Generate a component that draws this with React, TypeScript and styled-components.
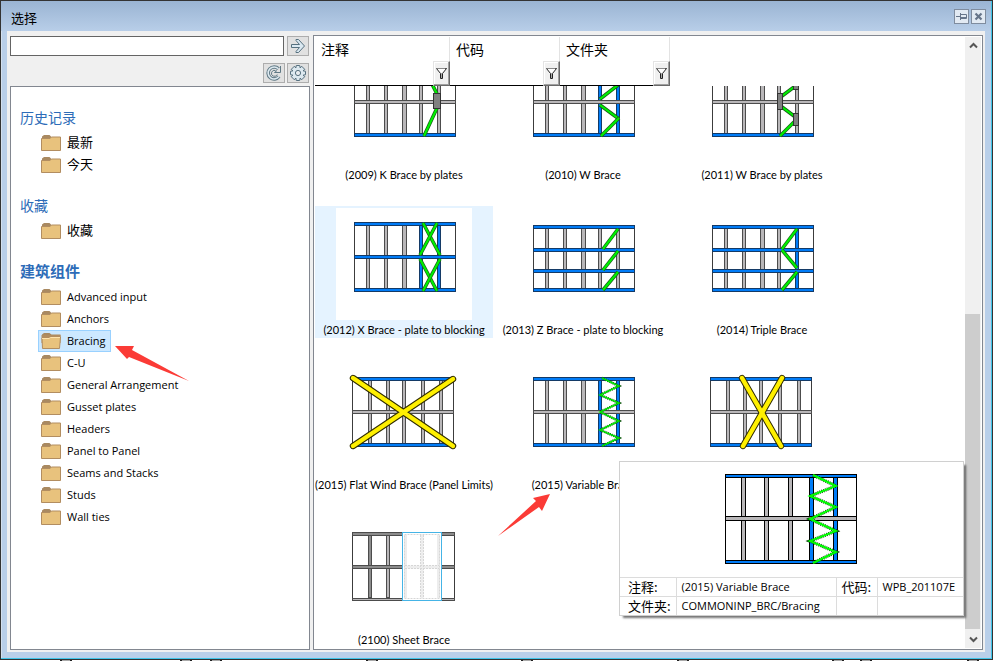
import React from "react";
import styled, { createGlobalStyle, css } from "styled-components";

const GlobalStyle = createGlobalStyle`
  *, *::before, *::after { box-sizing: border-box; }
  body {
    margin: 0;
    background: #fff;
    color: #000;
    font-family: "Open Sans", "Noto Sans CJK SC", sans-serif;
    font-size: 11px;
  }
  button, input { font: inherit; color: inherit; }
  svg { display: block; }
`;

const cjk = css`
  font-family: "Noto Sans CJK SC", sans-serif;
`;

/* ---------- window frame ---------- */

const Page = styled.div`
  display: flex;
  flex-direction: column;
  height: 100vh;
  min-height: 560px;
`;

const Window = styled.main`
  flex: 1;
  min-height: 0;
  margin-right: 1px;
  display: flex;
  flex-direction: column;
  padding: 0 7px 7px 6px;
  background: #b9cfe9;
  border: 1px solid #333;
  box-shadow: inset -1px -1px 0 #3fc4e8, inset 1px 1px 0 #d3e0ef;
`;

const TitleBar = styled.header`
  flex: none;
  display: flex;
  align-items: center;
  justify-content: space-between;
  height: 30px;
  margin: 0 -6px 0 -6px;
  padding: 0 5px 0 10px;
  background: linear-gradient(#9ab4d3, #b8cee8);
`;

const Title = styled.h1`
  ${cjk}
  margin: 0;
  padding-top: 4px;
  font-size: 13px;
  line-height: 20px;
  font-weight: 400;
`;

const CaptionButtons = styled.div`
  display: flex;
  gap: 2px;
`;

const CaptionButton = styled.button`
  width: 15px;
  height: 15px;
  padding: 0;
  display: grid;
  place-items: center;
  background: #e2eaf3;
  border: 1px solid #7f8c9e;
`;

const Body = styled.div`
  flex: 1;
  min-height: 0;
  display: flex;
  gap: 3px;
  padding: 4px 2px 2px;
  background: #f0f0f0;
  border-left: 1px solid #f0f0f0;
`;

const BottomEdge = styled.svg`
  flex: none;
  width: 100%;
  height: 1px;
`;

/* ---------- left side ---------- */

const Sidebar = styled.aside`
  flex: none;
  width: 300px;
  display: flex;
  flex-direction: column;
`;

const ToolRow = styled.div`
  display: flex;
  justify-content: flex-end;
  gap: 2px;
  height: 20px;
  margin: 1px 1px 6px 0;
`;

const SearchInput = styled.input`
  flex: 1;
  min-width: 0;
  margin-right: 1px;
  padding: 0 4px;
  background: #fff;
  border: 1px solid #646464;
  outline: none;
`;

const ToolButton = styled.button`
  width: 22px;
  padding: 0;
  display: grid;
  place-items: center;
  background: #e1e1e1;
  border: 1px solid #adadad;
`;

const Tree = styled.nav`
  flex: 1;
  margin-top: -3px;
  padding: 23px 9px 0;
  background: #fff;
  border: 1px solid #828790;
`;

const Section = styled.section`
  margin-bottom: 22px;
`;

const Heading = styled.h2<{ $strong?: boolean }>`
  ${cjk}
  height: 22px;
  margin: 0;
  color: #2d6cb8;
  font-size: ${(p) => (p.$strong ? 15 : 14)}px;
  font-weight: ${(p) => (p.$strong ? 700 : 400)};
  line-height: 14px;
`;

const List = styled.ul`
  margin: 0;
  padding: 0 0 0 18px;
  list-style: none;
`;

const ListItem = styled.li`
  display: flex;
  height: 22px;
`;

const TreeButton = styled.button<{ $selected?: boolean }>`
  position: relative;
  display: flex;
  align-items: center;
  gap: 6px;
  padding: 0 5px 0 2px;
  border: 1px solid ${(p) => (p.$selected ? "#99d1ff" : "transparent")};
  background: ${(p) => (p.$selected ? "#cce8ff" : "transparent")};
  line-height: 20px;
  white-space: nowrap;
`;

const TreeLabel = styled.span<{ $cjk?: boolean }>`
  padding-bottom: ${(p) => (p.$cjk ? 2 : 0)}px;
  font-size: ${(p) => (p.$cjk ? 13 : 11)}px;
`;

const TreePointer = styled.svg`
  position: absolute;
  left: 75px;
  top: 14px;
  z-index: 2;
`;

/* ---------- right side ---------- */

const Catalog = styled.section`
  position: relative;
  flex: 1;
  min-width: 0;
  display: flex;
  padding: 1px;
  background: #fff;
  border: 1px solid #828790;
`;

const CatalogMain = styled.div`
  flex: 1;
  min-width: 0;
  display: flex;
  flex-direction: column;
`;

const FilterBar = styled.div`
  flex: none;
  display: flex;
  height: 49px;
`;

const FilterCell = styled.div<{ $width: number }>`
  width: ${(p) => p.$width}px;
  display: flex;
  flex-direction: column;
  justify-content: space-between;
  padding-left: 6px;
  border-right: 1px solid #e3e3e3;
  border-bottom: 1px solid #000;
`;

const FilterLabel = styled.span`
  ${cjk}
  font-size: 14px;
  line-height: 24px;
`;

const FilterButton = styled.button`
  align-self: flex-end;
  width: 17px;
  height: 25px;
  margin: 0 -1px -1px 0;
  padding: 0;
  display: grid;
  place-items: center;
  background: #f0f0f0;
  border: 1px solid;
  border-color: #e3e3e3 #696969 #696969 #e3e3e3;
  box-shadow: inset -1px -1px 0 #a0a0a0, inset 1px 1px 0 #fff;
`;

const Gallery = styled.div`
  flex: 1;
  min-height: 0;
  overflow: hidden;
  display: flex;
  flex-direction: column;
  justify-content: flex-end;
`;

const Tiles = styled.div`
  display: grid;
  grid-template-columns: repeat(3, 178px);
  gap: 23px 1px;
`;

const Tile = styled.figure<{ $selected?: boolean }>`
  position: relative;
  display: flex;
  flex-direction: column;
  align-items: center;
  height: 132px;
  margin: 0;
  padding-top: 2px;
  background: ${(p) => (p.$selected ? "#e5f3ff" : "transparent")};
`;

const Thumb = styled.svg`
  flex: none;
  background: #fff;
`;

const Caption = styled.figcaption`
  font-family: Lato, "Liberation Sans", sans-serif;
  font-size: 11px;
  line-height: 20px;
  white-space: nowrap;
`;

const TilePointer = styled.svg`
  position: absolute;
  left: 4px;
  top: 132px;
`;

const ScrollBar = styled.div`
  flex: none;
  width: 16px;
  display: flex;
  flex-direction: column;
  background: #f0f0f0;
`;

const ScrollButton = styled.button`
  flex: none;
  height: 17px;
  padding: 0;
  display: grid;
  place-items: center;
  border: 0;
  background: transparent;
`;

const ScrollSpace = styled.div<{ $share: number }>`
  flex: ${(p) => p.$share};
`;

const ScrollThumb = styled.div`
  flex: 316;
  margin-right: 1px;
  background: #cdcdcd;
`;

const Preview = styled.div`
  position: absolute;
  right: 18px;
  bottom: 33px;
  background: #fff;
  border: 1px solid #d0d0d0;
  box-shadow: 3px 3px 2px -1px rgba(0, 0, 0, 0.55);
`;

const PreviewPicture = styled.div`
  display: flex;
  justify-content: center;
  padding: 12px 0 13px;
`;

const Details = styled.table`
  border-collapse: collapse;
  line-height: 18px;
  white-space: nowrap;

  th, td {
    height: 19px;
    padding: 0 5px;
    border-top: 1px solid #dcdcdc;
    border-right: 1px solid #dcdcdc;
    text-align: left;
    font-weight: 400;
  }
  th {
    ${cjk}
    padding: 0 5px 0 8px;
    font-size: 13px;
  }
  td + th { padding: 0 5px; }
  td:last-child { border-right: 0; }
`;

const DetailColumn = styled.col<{ $width: number }>`
  width: ${(p) => p.$width}px;
`;

/* ---------- icons ---------- */

const FolderIcon = ({ open }: { open?: boolean }) => (
  <svg width="20" height="16" viewBox="0 0 20 16" aria-hidden="true">
    {open ? (
      <>
        <path d="M1 3V1.5L3 0H8.5L10.5 1.5H19.5V4H1Z" fill="#a98961" />
        <path d="M.5 2H19.5V10H.5Z" fill="#b28d60" />
        <path d="M1 5H8L9.5 4H19.5L18.5 15.5H1.5Z" fill="#e8c27d" stroke="#b28d60" />
        <path d="M1 5.5H8L9.5 4.5H19" fill="none" stroke="#ffe4ad" />
      </>
    ) : (
      <>
        <path d="M1 3V1.5L3 0H8.5L10.5 2V4H1Z" fill="#a98961" />
        <path d="M.5 3.5H9L10.5 2H19.5V15.5H.5Z" fill="#e8c27d" stroke="#b28d60" />
      </>
    )}
  </svg>
);

const ArrowIcon = () => (
  <svg width="16" height="16" viewBox="0 0 16 16" aria-hidden="true">
    <path d="M1.5 6.5H9.5L6 2.5V1.5H8.5L14.5 8L8.5 14.5H6V13.5L9.5 9.5H1.5Z" fill="#dbe9f2" stroke="#56707f" />
  </svg>
);

const RefreshIcon = () => (
  <svg width="16" height="16" viewBox="0 0 16 16" fill="none" aria-hidden="true">
    <path d="M13 11.5A6 6 0 1 1 12.5 3.8" stroke="#607985" strokeWidth="3.6" />
    <path d="M13 11.5A6 6 0 1 1 12.5 3.8" stroke="#dce8ef" strokeWidth="1.6" />
    <path d="M14.5 1V7.5H8.5L11 5.5" stroke="#607985" />
    <path d="M11.2 9.5A3 3 0 1 1 9.5 5.5" stroke="#607985" />
  </svg>
);

const GearIcon = () => (
  <svg width="18" height="18" viewBox="-9 -9 18 18" fill="#dce8ef" stroke="#56707f" aria-hidden="true">
    <path
      d="M-1.7 -7.5H1.7L2.2 -5L3.6 -6.8L6.8 -3.6L5 -2.2L7.5 -1.7V1.7L5 2.2L6.8 3.6L3.6 6.8L2.2 5L1.7 7.5H-1.7L-2.2 5L-3.6 6.8L-6.8 3.6L-5 2.2L-7.5 1.7V-1.7L-5 -2.2L-6.8 -3.6L-3.6 -6.8L-2.2 -5Z"
      strokeLinejoin="round"
    />
    <circle r="2.6" fill="#e8edf0" />
  </svg>
);

const PinIcon = () => (
  <svg width="11" height="9" viewBox="0 0 11 9" fill="none" stroke="#66758a" aria-hidden="true">
    <path d="M0 4.5H4M4.5 1V8M4.5 2.5H10.5V6.5H4.5M4.5 5.5H10" />
  </svg>
);

const CloseIcon = () => (
  <svg width="9" height="9" viewBox="0 0 9 9" aria-hidden="true">
    <path d="M1.5 1.5L7.5 7.5M7.5 1.5L1.5 7.5" stroke="#66758a" strokeWidth="2.2" />
  </svg>
);

const FunnelIcon = () => (
  <svg width="11" height="11" viewBox="0 0 11 11" aria-hidden="true">
    <path d="M.5 .5H10.5L6.5 5.5V10.5H4.5V5.5Z" fill="#fff" stroke="#222" />
    <path d="M.5 .5H9.5" stroke="#888" />
    <path d="M5.5 5V10" stroke="#aaa" />
  </svg>
);

const ChevronIcon = ({ down }: { down?: boolean }) => (
  <svg width="9" height="7" viewBox="0 0 9 7" fill="none" stroke="#555" strokeWidth="2" aria-hidden="true">
    <path d={down ? "M1 1.5L4.5 5L8 1.5" : "M1 5.5L4.5 2L8 5.5"} />
  </svg>
);

/* ---------- wall panel drawings ---------- */

type Member = { at: number; size: number; blue?: boolean; dark?: boolean };
type Line = [number, number, number, number];

type Drawing = {
  left?: number;
  right?: number;
  rails: Member[];
  studs: Member[];
  braces?: Line[];
  plates?: Line[];
  straps?: Line[];
  zigzag?: string;
  sheet?: boolean;
};

const memberFill = (m: Member) => (m.blue ? "#007cf8" : m.dark ? "#8c8c8c" : "#b9b7b9");

const Panel = ({ drawing, ink }: { drawing: Drawing; ink?: string }) => {
  const { left = 18, right = 120, rails, studs } = drawing;
  const top = rails[0].at;
  const last = rails[rails.length - 1];
  const bottom = last.at + last.size;
  const outer = (i: number) => i === 0 || i === rails.length - 1;
  const edge = (m: Member) => ink ?? (m.blue ? "#143a66" : "#4c4c4c");
  const rail = (m: Member) => (
    <rect key={m.at} x={left + 0.5} y={m.at + 0.5} width={right - left - 1} height={m.size - 1} fill={memberFill(m)} stroke={edge(m)} />
  );
  return (
    <>
      <rect x={left + 0.5} y={top + 0.5} width={right - left - 1} height={bottom - top - 1} fill="#fff" stroke={ink ?? "#3c3c3c"} />
      {studs.map((m) => (
        <rect key={m.at} x={m.at + 0.5} y={top + 3.5} width={m.size - 1} height={bottom - top - 7} fill={memberFill(m)} stroke={edge(m)} />
      ))}
      {rails.filter((_, i) => !outer(i)).map(rail)}
      {rails.filter((_, i) => outer(i)).map(rail)}
      {drawing.braces?.map(([x1, y1, x2, y2], i) => (
        <g key={i}>
          <line x1={x1} y1={y1} x2={x2} y2={y2} stroke="#176017" strokeWidth="3.6" />
          <line x1={x1} y1={y1} x2={x2} y2={y2} stroke="#00f000" strokeWidth="2.1" />
        </g>
      ))}
      {drawing.plates?.map(([x, y, w, h], i) => (
        <rect key={i} x={x + 0.5} y={y + 0.5} width={w - 1} height={h - 1} fill="#808080" stroke="#333" />
      ))}
      {drawing.straps?.map(([x1, y1, x2, y2], i) => (
        <line key={i} x1={x1} y1={y1} x2={x2} y2={y2} stroke="#302c00" strokeWidth="6.4" strokeLinecap="round" />
      ))}
      {drawing.straps?.map(([x1, y1, x2, y2], i) => (
        <line key={i} x1={x1} y1={y1} x2={x2} y2={y2} stroke="#fff000" strokeWidth="4.4" strokeLinecap="round" />
      ))}
      {drawing.zigzag && (
        <g fill="none">
          <polyline points={drawing.zigzag} stroke="#053c05" strokeWidth={ink ? 3.4 : 2.6} strokeDasharray="1 1" />
          <polyline points={drawing.zigzag} stroke={ink ? "#00ff00" : "#00e400"} strokeWidth={ink ? 2 : 1.5} />
        </g>
      )}
      {drawing.sheet && (
        <g fill="none">
          <rect x="66" y="14" width="40" height="69" fill="#fff" />
          <path d="M69.5 17V80M102.5 17V80M86 17V80M68 49H104" stroke="#ededed" strokeWidth="3" />
          <path d="M68.5 16.5H103.5V80.5H68.5ZM84.5 17V80M87.5 17V80M69 47.5H103M69 50.5H103" stroke="#d6d6d6" strokeDasharray="2 1" />
          <rect x="66.5" y="14.5" width="39" height="68" stroke="#45b4e6" />
        </g>
      )}
    </>
  );
};

const studsAt = (blueFrom: number): Member[] =>
  [
    [30, 4],
    [48, 4],
    [66, 5],
    [83, 4],
    [101, 4],
  ].map(([at, size], i) => ({ at, size, blue: i >= blueFrom }));

const twoRails = (midBlue = false): Member[] => [
  { at: 14, size: 4, blue: true },
  { at: 47, size: 4, blue: midBlue },
  { at: 80, size: 4, blue: true },
];

const threeRails: Member[] = [
  { at: 17, size: 4, blue: true },
  { at: 40, size: 4, blue: true },
  { at: 61, size: 4, blue: true },
  { at: 80, size: 4, blue: true },
];

type Item = { label: string; drawing: Drawing; selected?: boolean; pointed?: boolean };

const items: Item[] = [
  {
    label: "(2009) K Brace by plates",
    drawing: {
      rails: twoRails(),
      studs: studsAt(5),
      braces: [[88, 15, 101, 41], [101, 55, 88, 83]],
      plates: [[97, 40, 8, 16]],
    },
  },
  {
    label: "(2010) W Brace",
    drawing: {
      rails: twoRails(),
      studs: studsAt(3),
      braces: [[86, 15, 103, 32], [103, 32, 85, 46], [85, 52, 104, 66], [104, 65, 86, 83]],
    },
  },
  {
    label: "(2011) W Brace by plates",
    drawing: {
      rails: twoRails(),
      studs: studsAt(5),
      braces: [[86, 15, 99, 28], [100, 34, 88, 43], [88, 54, 100, 63], [100, 69, 86, 83]],
      plates: [[83, 40, 6, 17], [99, 60, 6, 13], [99, 25, 6, 12]],
    },
  },
  {
    label: "(2012) X Brace - plate to blocking",
    selected: true,
    drawing: {
      rails: twoRails(true),
      studs: studsAt(3),
      braces: [[87, 15, 104, 47], [101, 15, 84, 47], [84, 51, 101, 83], [104, 51, 87, 83]],
    },
  },
  {
    label: "(2013) Z Brace - plate to blocking",
    drawing: {
      rails: threeRails,
      studs: studsAt(5),
      braces: [[88, 41, 103, 21], [88, 62, 103, 43], [88, 82, 103, 64]],
    },
  },
  {
    label: "(2014) Triple Brace",
    drawing: {
      rails: threeRails,
      studs: studsAt(4),
      braces: [[88, 41, 103, 21], [88, 42, 103, 60], [88, 82, 103, 64]],
    },
  },
  {
    label: "(2015) Flat Wind Brace (Panel Limits)",
    drawing: {
      left: 16,
      right: 118,
      rails: twoRails(),
      studs: [32, 50, 66, 85, 103].map((at) => ({ at, size: 4 })),
      straps: [[117, 16, 17, 83], [17, 15, 117, 83]],
    },
  },
  {
    label: "(2015) Variable Brace",
    pointed: true,
    drawing: {
      rails: twoRails(),
      studs: studsAt(3),
      zigzag: "87,15 104,23 85,32 104,40 85,49 104,58 85,67 104,75 87,83",
    },
  },
  {
    label: "",
    drawing: {
      left: 16,
      right: 118,
      rails: twoRails(),
      studs: [32, 49, 65, 84, 103].map((at) => ({ at, size: 4 })),
      straps: [[88, 15, 49, 83], [48, 15, 87, 83]],
    },
  },
  {
    label: "(2100) Sheet Brace",
    drawing: {
      left: 16,
      right: 119,
      rails: [
        { at: 14, size: 4, dark: true },
        { at: 47, size: 4, dark: true },
        { at: 80, size: 3 },
      ],
      studs: [{ at: 32, size: 4, dark: true }, { at: 50, size: 4 }],
      sheet: true,
    },
  },
];

const previewDrawing: Drawing = {
  left: 0,
  right: 132,
  rails: [
    { at: 0, size: 4, blue: true },
    { at: 42, size: 5 },
    { at: 86, size: 4, blue: true },
  ],
  studs: [
    { at: 16, size: 5 },
    { at: 39, size: 5 },
    { at: 63, size: 5 },
    { at: 84, size: 5, blue: true },
    { at: 108, size: 5, blue: true },
  ],
  zigzag: "88,1 111,12 85,22 111,33 85,45 111,57 85,67 111,78 88,89",
};

/* ---------- data ---------- */

const sections = [
  { title: "历史记录", entries: ["最新", "今天"], local: true },
  { title: "收藏", entries: ["收藏"], local: true },
  {
    title: "建筑组件",
    strong: true,
    entries: [
      "Advanced input",
      "Anchors",
      "Bracing",
      "C-U",
      "General Arrangement",
      "Gusset plates",
      "Headers",
      "Panel to Panel",
      "Seams and Stacks",
      "Studs",
      "Wall ties",
    ],
  },
];

const filters = [
  { title: "注释", width: 135 },
  { title: "代码", width: 110 },
  { title: "文件夹", width: 110 },
];

const edgeMarks = [60, 180, 210, 366, 521, 677, 832, 860, 967];

export default function App() {
  return (
    <Page>
      <GlobalStyle />
      <Window>
        <TitleBar>
          <Title>选择</Title>
          <CaptionButtons>
            <CaptionButton aria-label="固定"><PinIcon /></CaptionButton>
            <CaptionButton aria-label="关闭"><CloseIcon /></CaptionButton>
          </CaptionButtons>
        </TitleBar>
        <Body>
          <Sidebar>
            <ToolRow>
              <SearchInput type="text" aria-label="搜索" />
              <ToolButton aria-label="转到"><ArrowIcon /></ToolButton>
            </ToolRow>
            <ToolRow>
              <ToolButton aria-label="刷新"><RefreshIcon /></ToolButton>
              <ToolButton aria-label="设置"><GearIcon /></ToolButton>
            </ToolRow>
            <Tree>
              {sections.map((s) => (
                <Section key={s.title}>
                  <Heading $strong={s.strong}>{s.title}</Heading>
                  <List>
                    {s.entries.map((name) => (
                      <ListItem key={name}>
                        <TreeButton $selected={name === "Bracing"}>
                          <FolderIcon open={name === "Bracing"} />
                          <TreeLabel $cjk={s.local}>{name}</TreeLabel>
                          {name === "Bracing" && (
                            <TreePointer width="76" height="38" viewBox="0 0 76 38" aria-hidden="true">
                              <path d="M1 1L20 1L18 5L75 36L15 12L13 14Z" fill="#fb3b36" />
                            </TreePointer>
                          )}
                        </TreeButton>
                      </ListItem>
                    ))}
                  </List>
                </Section>
              ))}
            </Tree>
          </Sidebar>

          <Catalog>
            <CatalogMain>
              <FilterBar>
                {filters.map((f) => (
                  <FilterCell key={f.title} $width={f.width}>
                    <FilterLabel>{f.title}</FilterLabel>
                    <FilterButton aria-label={`筛选${f.title}`}><FunnelIcon /></FilterButton>
                  </FilterCell>
                ))}
              </FilterBar>
              <Gallery>
                <Tiles>
                  {items.map((item, i) => (
                    <Tile key={i} $selected={item.selected}>
                      <Thumb width="136" height="112" viewBox="0 0 136 112" aria-hidden="true">
                        <Panel drawing={item.drawing} />
                      </Thumb>
                      <Caption>{item.label}</Caption>
                      {item.pointed && (
                        <TilePointer width="54" height="44" viewBox="0 0 54 44" aria-hidden="true">
                          <path d="M52 1L35 5L38 8L0 43L41 14L44 18Z" fill="#fb3b36" />
                        </TilePointer>
                      )}
                    </Tile>
                  ))}
                </Tiles>
              </Gallery>
            </CatalogMain>
            <ScrollBar>
              <ScrollButton aria-label="向上滚动"><ChevronIcon /></ScrollButton>
              <ScrollSpace $share={260} />
              <ScrollThumb />
              <ScrollSpace $share={2} />
              <ScrollButton aria-label="向下滚动"><ChevronIcon down /></ScrollButton>
            </ScrollBar>

            <Preview role="tooltip">
              <PreviewPicture>
                <svg width="132" height="90" viewBox="0 0 132 90" aria-hidden="true">
                  <Panel drawing={previewDrawing} ink="#000" />
                </svg>
              </PreviewPicture>
              <Details>
                <colgroup>
                  <DetailColumn $width={56} />
                  <DetailColumn $width={160} />
                  <DetailColumn $width={41} />
                  <DetailColumn $width={86} />
                </colgroup>
                <tbody>
                  <tr>
                    <th scope="row">注释:</th>
                    <td>(2015) Variable Brace</td>
                    <th scope="row">代码:</th>
                    <td>WPB_201107E</td>
                  </tr>
                  <tr>
                    <th scope="row">文件夹:</th>
                    <td>COMMONINP_BRC/Bracing</td>
                    <td />
                    <td />
                  </tr>
                </tbody>
              </Details>
            </Preview>
          </Catalog>
        </Body>
      </Window>
      <BottomEdge aria-hidden="true">
        {edgeMarks.map((x) => (
          <React.Fragment key={x}>
            <rect x={x} width="12" height="1" fill="#222" />
            <rect x={x + 2} width="8" height="1" fill="#aaa" />
          </React.Fragment>
        ))}
      </BottomEdge>
    </Page>
  );
}
